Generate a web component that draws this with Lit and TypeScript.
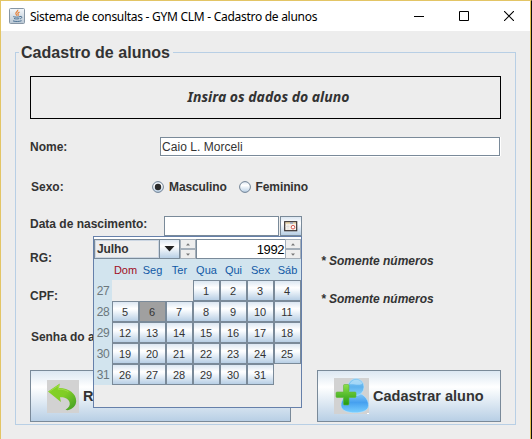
import { LitElement, html, svg, css } from "lit";
import { customElement } from "lit/decorators.js";
import { classMap } from "lit/directives/class-map.js";

const WEEKDAYS = ["Dom", "Seg", "Ter", "Qua", "Qui", "Sex", "Sáb"];
const FIRST_WEEK = 27;
const FIRST_COLUMN = 3;
const DAYS_IN_MONTH = 31;

const javaIcon = html`<svg class="java" width="16" height="16" viewBox="0 0 16 16">
  <defs><linearGradient id="jv" x1="0" y1="0" x2="0" y2="1"><stop offset="0" stop-color="#f4f7fa"/><stop offset="1" stop-color="#b9c7d4"/></linearGradient></defs>
  <rect x=".5" y=".5" width="15" height="15" rx="1" fill="url(#jv)" stroke="#8796a5"/>
  <path d="M8.7 1.8c.8 1.700-2.600 2.300-1.800 4.100.3.700.9 1.100.8 1.900M10.600 4c-1.500.7-2.200 1.300-1.500 2.300.4.600.2 1-.2 1.500" fill="none" stroke="#e5823c" stroke-width="1.200"/>
  <path d="M4.300 8.600c1.500.7 5 .7 6.700 0M5 10.500c1.500.6 4 .6 5.300 0M4 12.900c2.500.8 6.500.7 8.600-.2M11 8.500c2.400-.7 2.400 1.700.2 2.300" fill="none" stroke="#496f91" stroke-width="1"/>
</svg>`;

const backIcon = html`<svg class="pic-back" width="32" height="33" viewBox="0 0 32 33">
  <defs><linearGradient id="bk" x1="0" y1="0" x2="1" y2="1"><stop offset="0" stop-color="#84d324"/><stop offset=".5" stop-color="#80cd27"/><stop offset="1" stop-color="#3c9a24"/></linearGradient></defs>
  <rect width="32" height="33" fill="#d2d2d2"/>
  <path d="M1 11.500 12.800 3.600 12 8C22 8.300 29.200 13.500 29.200 21c-.2 5-3.400 8-8.700 9.300l-2-.6c3.600-2 4.900-4.500 4-7.600-1.100-3.600-5-5.200-9.500-4.900l.9 4.700Z" fill="url(#bk)"/>
  <path d="M2.500 11.500 11.700 5.400l-.5 3.800c4-.2 7.700.8 10.200 2.400" fill="none" stroke="#a5e04c" stroke-width=".8"/>
</svg>`;

const userIcon = html`<svg class="pic-user" width="35" height="36" viewBox="0 0 35 36">
  <defs>
    <linearGradient id="hd" x1="0" y1="0" x2="0" y2="1"><stop offset="0" stop-color="#8accf3"/><stop offset=".5" stop-color="#5eb2ee"/><stop offset="1" stop-color="#86d0fc"/></linearGradient>
    <linearGradient id="bd" x1="0" y1="0" x2="0" y2="1"><stop offset="0" stop-color="#7fc5f8"/><stop offset=".45" stop-color="#46a0ef"/><stop offset="1" stop-color="#78cfff"/></linearGradient>
    <linearGradient id="pl" x1="0" y1="0" x2="0" y2="1"><stop offset="0" stop-color="#8de04a"/><stop offset="1" stop-color="#219a12"/></linearGradient>
  </defs>
  <rect width="35" height="36" fill="#d2d2d2"/>
  <path d="M7 27.500c0-6 4-9.500 8-11.500h12c4.500 2 7.500 6.500 7.500 11.500 0 5-6.500 7.300-13.500 7.300S7 32.500 7 27.500Z" fill="url(#bd)" stroke="#b4e2ff" stroke-width=".6"/>
  <ellipse cx="22" cy="9" rx="8" ry="8.600" fill="url(#hd)" stroke="#b4e2ff" stroke-width=".6"/>
  <path d="M15.500 6.500c2-6 10.500-6.500 13-1-3 3-9 0-13 1Z" fill="#c4e8fc" opacity=".6"/>
  <path d="M9.500 7.500q0-1 1-1h3.500q1 0 1 1V14h6q1 0 1 1v3.500q0 1-1 1h-6v6.500q0 1-1 1h-3.500q-1 0-1-1v-6.500H3q-1 0-1-1V15q0-1 1-1h6.500Z" fill="url(#pl)" stroke="#61b738" stroke-width=".6"/>
  <path d="M33 35h2v1h-2z" fill="#fff"/>
</svg>`;

const arrow = (up: boolean) => html`<span class="step"><svg width="4" height="3" viewBox="0 0 4 3">
  ${up ? svg`<path d="M0 2.500 2 .3 4 2.500Z" fill="#777"/>` : svg`<path d="M0 .5 2 2.700 4 .5Z" fill="#777"/>`}
</svg></span>`;

@customElement("date-popup")
class DatePopup extends LitElement {
  static styles = css`
    :host { display: block; box-sizing: border-box; width: 209px; height: 172px; border: 1px solid #6680aa;
      background: #ededed; font: 12px "Liberation Sans", Arial, sans-serif; color: #333; }
    .bar { display: flex; height: 23px; padding-top: 2px; box-sizing: border-box; background: linear-gradient(#fff 2px, #d2e4ee 2px); }
    .month { display: flex; box-sizing: border-box; width: 86px; height: 20px; border: 1px solid #7a8a99; background: #eee; }
    .name { flex: 1; font-weight: bold; font-size: 12px; letter-spacing: -.1px; line-height: 19px; padding-left: 2px; box-shadow: inset 0 0 0 1px #ccd6e2; }
    .drop { width: 19px; border-left: 1px solid #7a8a99; background: linear-gradient(#dfe9f3, #fff 35%, #b8cfe5); display: flex; align-items: center; justify-content: center; }
    .steps { width: 16px; height: 20px; display: flex; flex-direction: column; }
    .step { flex: 1; box-sizing: border-box; border: 1px solid #a5afb9; background: #eee; display: flex; align-items: center; justify-content: center; }
    .year { width: 90px; height: 20px; box-sizing: border-box; border: 1px solid #7a8a99; border-right: 0; background: #fff; color: #000;
      text-align: right; font-size: 13px; letter-spacing: -.4px; line-height: 20px; padding-right: 1px; }
    .grid { display: grid; grid-template-columns: 18px repeat(7, 27px); grid-template-rows: 20px repeat(5, 21px); }
    .head { background: #d2e4ee; color: #1159a5; text-align: center; line-height: 21px; font-size: 11px; }
    .sun { color: #a00e1d; }
    .week { background: #d2e4ee; color: #6b777c; text-align: center; line-height: 22px; letter-spacing: -.4px; }
    .day { box-sizing: border-box; border: 1px solid #7a8a99; background: linear-gradient(#dce7f2, #fff 35%, #f7fafd 45%, #b8cfe5);
      text-align: center; line-height: 20px; font-size: 11px; padding-right: 1px; }
    .on { background: #a0a0a0; }
  `;
  render() {
    const weeks = [0, 1, 2, 3, 4];
    return html`
      <div class="bar">
        <div class="month"><span class="name">Julho</span><span class="drop"><svg width="11" height="6" viewBox="0 0 11 6"><path d="M.5 0h10l-5 5.500Z" fill="#222"/></svg></span></div>
        <div class="steps">${arrow(true)}${arrow(false)}</div>
        <div class="year">1992</div>
        <div class="steps">${arrow(true)}${arrow(false)}</div>
      </div>
      <div class="grid">
        <span class="head"></span>
        ${WEEKDAYS.map((d, i) => html`<span class=${classMap({ head: true, sun: i === 0 })}>${d}</span>`)}
        ${weeks.map((w) => html`<span class="week">${FIRST_WEEK + w}</span>${WEEKDAYS.map((_, c) => {
          const n = w * 7 + c - FIRST_COLUMN + 1;
          return n < 1 || n > DAYS_IN_MONTH ? html`<span></span>` : html`<span class=${classMap({ day: true, on: n === 6 })}>${n}</span>`;
        })}`)}
      </div>`;
  }
}

@customElement("app-root")
class AppRoot extends LitElement {
  static styles = css`
    :host { display: block; position: relative; box-sizing: border-box; width: 532px; height: 439px; overflow: hidden; background: #ededed;
      border-left: 1px solid #e3c565; border-top: 1px solid #e3c565; border-right: 1px solid #111; color: #333;
      font: bold 12px/16px "Liberation Sans", Arial, sans-serif; }
    .window { height: 438px; border-right: 1px solid #e0c252; box-sizing: border-box; }
    .title { height: 30px; background: #fff; display: flex; align-items: center; padding: 0 12px 0 8px; color: #000;
      font: 12px "Noto Sans", "Open Sans", sans-serif; }
    .title .text { margin-left: 5px; flex: 1; white-space: nowrap; letter-spacing: -.28px; }
    .controls { display: flex; gap: 35px; align-items: center; margin-right: 4px; }
    .group { box-sizing: border-box; margin: 21px 0 0 14px; width: 501px; height: 373px; border: 1px solid #b8cfe5; padding: 0 14px; }
    .legend { display: block; width: max-content; margin: -10px 0 0 -11px; padding: 0 3px 0 2px; height: 19px; line-height: 19px; background: #ededed;
      font-size: 16px; letter-spacing: .03px; white-space: nowrap; }
    .banner { box-sizing: border-box; height: 43px; margin-top: 14px; border: 1px solid #000; text-align: center; line-height: 40px;
      padding-left: 6px; font-family: "Noto Sans", sans-serif; font-size: 14px; font-style: italic; letter-spacing: 0; }
    .row { display: flex; align-items: center; white-space: nowrap; }
    .name-row { height: 20px; margin-top: 17px; padding-bottom: 1px; }
    .name-row .label { padding-top: 2px; }
    .sex-row { height: 20px; margin-top: 20px; }
    .date-row { height: 20px; margin-top: 19px; margin-bottom: 3px; }
    .label { width: 130px; }
    .sex-row .label { width: 121px; padding-left: 1px; }
    .date-row .label { width: 134px; padding-bottom: 4px; box-sizing: border-box; }
    .input { box-sizing: border-box; background: #fff; border: 1px solid #7a8a99; box-shadow: 0 1px #fff, 1px 0 #fff; height: 19px; font-weight: normal; line-height: 19px; padding-left: 1px; }
    .name-row .input { width: 340px; font-size: 12px; letter-spacing: .05px; }
    .date-row .input { width: 115px; height: 20px; box-shadow: none; }
    .pick { margin-left: 1px; width: 22px; height: 20px; box-sizing: border-box; border: 1px solid #7a8a99; background: linear-gradient(#dce7f2, #fff 35%, #b8cfe5); display: flex; align-items: center; justify-content: center; }
    .option { display: flex; align-items: center; gap: 5px; margin-right: 12px; letter-spacing: -.12px; }
    .note-row { height: 38px; }
    .note-row .label { width: 291px; }
    .note { font-style: italic; padding-top: 5px; }
    .pass-row { height: 38px; padding-top: 3px; }
    .pass-row .label { width: 63px; overflow: hidden; letter-spacing: -.05px; padding-left: 1px; box-sizing: border-box; }
    .buttons { display: flex; justify-content: space-between; margin-top: 14px; }
    .btn { box-sizing: border-box; height: 52px; border: 1px solid #7a8a99; background: linear-gradient(#dce7f2, #fff 32%, #f4f8fb 42%, #b8cfe5); display: flex; align-items: center;
      padding-left: 16px; gap: 4px; font-size: 14.500px; white-space: nowrap; }
    .back { width: 261px; }
    .back span { width: 10px; overflow: hidden; }
    .add { width: 184px; letter-spacing: .02px; }
    .popup { position: absolute; left: 92px; top: 235px; }
    .pic-back { margin-top: 1px; }
  `;
  radio(on: boolean) {
    return html`<svg width="12" height="12" viewBox="0 0 12 12">
      <defs><linearGradient id="rg" x1="0" y1="0" x2="0" y2="1"><stop offset="0" stop-color="#dce7f2"/><stop offset=".35" stop-color="#fff"/><stop offset="1" stop-color="#b8cfe5"/></linearGradient></defs>
      <circle cx="6" cy="6" r="5.400" fill="url(#rg)" stroke="#6f8093"/>
      ${on ? svg`<circle cx="6" cy="6" r="3.200" fill="#2b2b2b"/>` : ""}
    </svg>`;
  }
  render() {
    return html`
      <div class="window">
        <div class="title">${javaIcon}<span class="text">Sistema de consultas - GYM CLM - Cadastro de alunos</span>
          <span class="controls">
            <svg width="10" height="10" viewBox="0 0 10 10"><path d="M0 5.500h10" stroke="#000"/></svg>
            <svg width="10" height="10" viewBox="0 0 10 10"><path d="M.5.500h9v9h-9Z" fill="none" stroke="#000"/></svg>
            <svg width="10" height="10" viewBox="0 0 10 10"><path d="M0 0 10 10M10 0 0 10" stroke="#000" stroke-width="1.100"/></svg>
          </span>
        </div>
        <div class="group">
          <span class="legend">Cadastro de alunos</span>
          <div class="banner">Insira os dados do aluno</div>
          <div class="row name-row"><span class="label">Nome:</span><div class="input">Caio L. Morceli</div></div>
          <div class="row sex-row"><span class="label">Sexo:</span>
            <span class="option">${this.radio(true)}Masculino</span>
            <span class="option">${this.radio(false)}Feminino</span></div>
          <div class="row date-row"><span class="label">Data de nascimento:</span><div class="input"></div>
            <span class="pick"><svg width="14" height="11" viewBox="0 0 14 11"><rect x=".7" y=".7" width="12" height="9" fill="#f6f1ea" stroke="#3a3231" stroke-width="1.200"/><path d="M1.500 2h10.500" stroke="#d8bd7d"/><path d="M6 2h3" stroke="#6f8fd0"/><path d="M4 3.500v5M1.500 5.500h4" stroke="#ddd" stroke-width=".7"/><circle cx="9" cy="6.200" r="1.800" fill="#fff" stroke="#d65b50"/></svg></span></div>
          <div class="row note-row"><span class="label">RG:</span><span class="note">* Somente números</span></div>
          <div class="row note-row"><span class="label">CPF:</span><span class="note">* Somente números</span></div>
          <div class="row pass-row"><span class="label">Senha do a</span></div>
          <div class="buttons">
            <div class="btn back">${backIcon}<span>R</span></div>
            <div class="btn add">${userIcon}<span>Cadastrar aluno</span></div>
          </div>
        </div>
      </div>
      <date-popup class="popup"></date-popup>`;
  }
}
